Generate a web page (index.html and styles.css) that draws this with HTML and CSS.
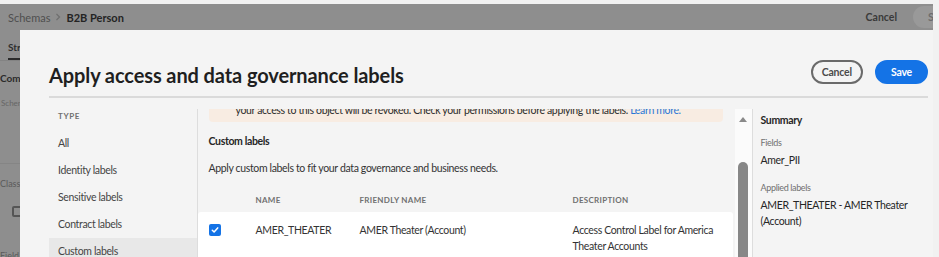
FILE: index.html
```html
<!DOCTYPE html>
<html lang="en">
<head>
    <meta charset="UTF-8">
    <meta name="viewport" content="width=device-width, initial-scale=1.0">
    <title>Apply access and data governance labels</title>
    <link rel="stylesheet" href="styles.css">
</head>
<body>
    <div class="page">
        <!-- Dimmed schema editor behind the dialog -->
        <header class="topbar">
            <nav class="crumbs">
                <span>Schemas</span>
                <svg class="chevron" width="6" height="8" viewBox="0 0 6 8"><path d="M1.5 1 L4.5 4 L1.5 7" fill="none" stroke="#6f6f6f" stroke-width="1.2"/></svg>
                <strong>B2B Person</strong>
            </nav>
            <div class="top-actions">
                <span class="bg-cancel">Cancel</span>
                <span class="bg-save">S</span>
            </div>
        </header>

        <div class="behind-tabs">
            <span class="tab">Structure</span>
        </div>
        <div class="behind-side">
            <div class="side-title">Composition</div>
            <div class="side-small">Schema</div>
            <div class="side-block">
                <div class="side-label">Class</div>
                <span class="side-check"></span>
            </div>
            <div class="side-label side-field">Field groups</div>
        </div>

        <!-- Dialog -->
        <section class="modal">
            <div class="modal-head">
                <h1>Apply access and data governance labels</h1>
                <div class="actions">
                    <button class="btn-outline">Cancel</button>
                    <button class="btn-primary">Save</button>
                </div>
            </div>

            <div class="modal-body">
                <nav class="types">
                    <div class="types-title">Type</div>
                    <a class="type-item">All</a>
                    <a class="type-item">Identity labels</a>
                    <a class="type-item">Sensitive labels</a>
                    <a class="type-item">Contract labels</a>
                    <a class="type-item selected">Custom labels</a>
                </nav>

                <div class="content-wrap">
                    <div class="content">
                        <div class="banner">
                            your access to this object will be revoked. Check your permissions before applying the labels. <a class="link">Learn more.</a>
                        </div>
                        <h2>Custom labels</h2>
                        <p class="intro">Apply custom labels to fit your data governance and business needs.</p>

                        <div class="table">
                            <div class="thead">
                                <span></span>
                                <span>Name</span>
                                <span>Friendly name</span>
                                <span>Description</span>
                            </div>
                            <div class="trow">
                                <span class="checkbox">
                                    <svg width="8" height="8" viewBox="0 0 8 8"><path d="M1.3 4.2 L3.1 6 L6.7 1.9" fill="none" stroke="#fff" stroke-width="1.5" stroke-linecap="round" stroke-linejoin="round"/></svg>
                                </span>
                                <span>AMER_THEATER</span>
                                <span>AMER Theater (Account)</span>
                                <span>Access Control Label for America Theater Accounts</span>
                            </div>
                        </div>
                    </div>
                    <div class="scrollbar">
                        <span class="arrow-up"></span>
                        <span class="thumb"></span>
                    </div>
                </div>

                <aside class="summary">
                    <h3>Summary</h3>
                    <div class="sum-label">Fields</div>
                    <div class="sum-value">Amer_PII</div>
                    <div class="sum-label applied">Applied labels</div>
                    <div class="sum-value">AMER_THEATER - AMER Theater (Account)</div>
                </aside>
            </div>
        </section>
    </div>
</body>
</html>
```

FILE: styles.css
```css
* {
    margin: 0;
    padding: 0;
    box-sizing: border-box;
}

body {
    font-family: Lato, "Open Sans", sans-serif;
    background: #f1f1f1;
    width: 939px;
    height: 257px;
    overflow: hidden;
    padding: 4px 6px 0 0;
}

.page {
    position: relative;
    height: 253px;
    background: #8e8e8e;
    overflow: hidden;
}

/* ---- background page (dimmed) ---- */

.topbar {
    height: 26px;
    display: flex;
    align-items: center;
    justify-content: space-between;
    padding-left: 8px;
}

.crumbs {
    display: flex;
    align-items: center;
    gap: 5px;
    font-size: 11px;
    color: #4f4f4f;
}

.crumbs strong {
    color: #242424;
    font-weight: 700;
}

.top-actions {
    display: flex;
    align-items: center;
    gap: 16px;
}

.bg-cancel {
    font-size: 10.5px;
    font-weight: 700;
    color: #3a3a3a;
}

.bg-save {
    width: 20px;
    height: 22px;
    border-radius: 11px 0 0 11px;
    background: #999;
    color: #6c6c6c;
    font-size: 11px;
    font-weight: 700;
    padding-left: 15px;
    line-height: 22px;
    overflow: hidden;
}

.behind-tabs {
    height: 31px;
    border-bottom: 1px solid #838383;
    padding-left: 8px;
    display: flex;
    align-items: flex-end;
}

.tab {
    font-size: 10px;
    font-weight: 700;
    color: #2e2e2e;
    padding-bottom: 5px;
    border-bottom: 2px solid #2b2b2b;
}

.behind-side {
    width: 200px;
}

.side-title {
    font-size: 10px;
    font-weight: 700;
    color: #2b2b2b;
    margin-top: 11px;
}

.side-small {
    font-size: 8px;
    color: #666;
    margin-top: 14px;
    padding-left: 1px;
}

.side-block {
    margin-top: 55px;
    border-top: 1px solid #858585;
    padding-top: 14px;
}

.side-label {
    font-size: 9px;
    color: #5a5a5a;
}

.side-check {
    display: block;
    width: 11px;
    height: 11px;
    border: 2px solid #555;
    border-radius: 2px;
    margin: 17px 0 0 12px;
}

.side-field {
    margin-top: 33px;
}

/* ---- dialog ---- */

.modal {
    position: absolute;
    left: 20px;
    top: 26px;
    right: 0;
    bottom: 0;
    background: #f4f4f4;
    padding: 0 5px 0 29px;
    color: #262626;
    font-size: 10.5px;
    letter-spacing: -0.35px;
}

.modal-head {
    display: flex;
    align-items: flex-start;
    justify-content: space-between;
    padding: 30px 0 11px;
    border-bottom: 2px solid #dadada;
}

.modal-head h1 {
    font-size: 20px;
    line-height: 20px;
    padding-top: 5px;
    font-weight: 700;
    letter-spacing: -0.1px;
    color: #1f1f1f;
}

.actions {
    display: flex;
    gap: 12px;
}

.actions button {
    font-family: inherit;
    font-size: 10.5px;
    letter-spacing: -0.2px;
    font-weight: 700;
    height: 24px;
    border-radius: 12px;
    cursor: pointer;
}

.btn-outline {
    background: transparent;
    border: 2px solid #6a6a6a;
    color: #4b4b4b;
    padding: 0 9px;
}

.btn-primary {
    background: #1473e6;
    border: 2px solid #1473e6;
    color: #fff;
    padding: 0 14px;
}

.modal-body {
    display: flex;
    margin-top: 11px;
    height: 160px;
}

.types {
    width: 149px;
    border-right: 1px solid #dddddd;
}

.types-title {
    font-size: 8px;
    font-weight: 700;
    text-transform: uppercase;
    letter-spacing: 0.6px;
    color: #707070;
    line-height: 14px;
    padding-left: 9px;
    margin-bottom: 7px;
}

.type-item {
    display: block;
    height: 27px;
    line-height: 27px;
    padding-left: 9px;
    color: #454545;
}

.type-item.selected {
    background: #e8e8e8;
}

.content-wrap {
    display: flex;
    width: 555px;
    border-right: 1px solid #dddddd;
}

.content {
    width: 537px;
    overflow: hidden;
}

.banner {
    margin: -11px 12px 0 11px;
    background: #f8ece2;
    border-radius: 4px;
    padding: 4px 12px 4px 27px;
    font-size: 10.5px;
    line-height: 16px;
    color: #2c2c2c;
    white-space: nowrap;
    overflow: hidden;
}

.link {
    color: #2a77d6;
}

.content h2 {
    font-size: 10.5px;
    font-weight: 700;
    line-height: 16px;
    margin: 11px 0 0 11px;
    color: #262626;
}

.intro {
    line-height: 16px;
    margin: 11px 0 0 11px;
    color: #333;
}

.table {
    margin-top: 16px;
    margin-right: 2px;
}

.thead,
.trow {
    display: grid;
    grid-template-columns: 58px 104px 213px 1fr;
}

.thead {
    padding-bottom: 4px;
    font-size: 8px;
    font-weight: 700;
    text-transform: uppercase;
    letter-spacing: 0.3px;
    line-height: 16px;
    color: #707070;
}

.trow {
    background: #ffffff;
    padding: 10px 0 8px;
    line-height: 16px;
    color: #333;
    border-radius: 3px 3px 0 0;
}

.trow span:last-child {
    padding-right: 10px;
}

.checkbox {
    width: 12px;
    height: 12px;
    margin: 2px 0 0 11px;
    background: #1473e6;
    border-radius: 2px;
    display: flex;
    align-items: center;
    justify-content: center;
}

.scrollbar {
    width: 17px;
    background: #fbfbfb;
    display: flex;
    flex-direction: column;
    align-items: center;
}

.arrow-up {
    margin-top: 8px;
    width: 0;
    height: 0;
    border-left: 4px solid transparent;
    border-right: 4px solid transparent;
    border-bottom: 5px solid #8a8a8a;
}

.thumb {
    margin-top: 40px;
    width: 10px;
    flex: 1;
    background: #878787;
    border-radius: 5px 5px 0 0;
}

.summary {
    padding: 3px 0 0 8px;
    width: 176px;
}

.summary h3 {
    font-size: 10.5px;
    font-weight: 700;
    line-height: 16px;
    color: #262626;
}

.sum-label {
    font-size: 9px;
    line-height: 14px;
    color: #707070;
    margin-top: 8px;
}

.sum-label.applied {
    margin-top: 13px;
}

.sum-value {
    line-height: 16px;
    color: #262626;
    margin-top: 2px;
    padding-right: 10px;
}
```
